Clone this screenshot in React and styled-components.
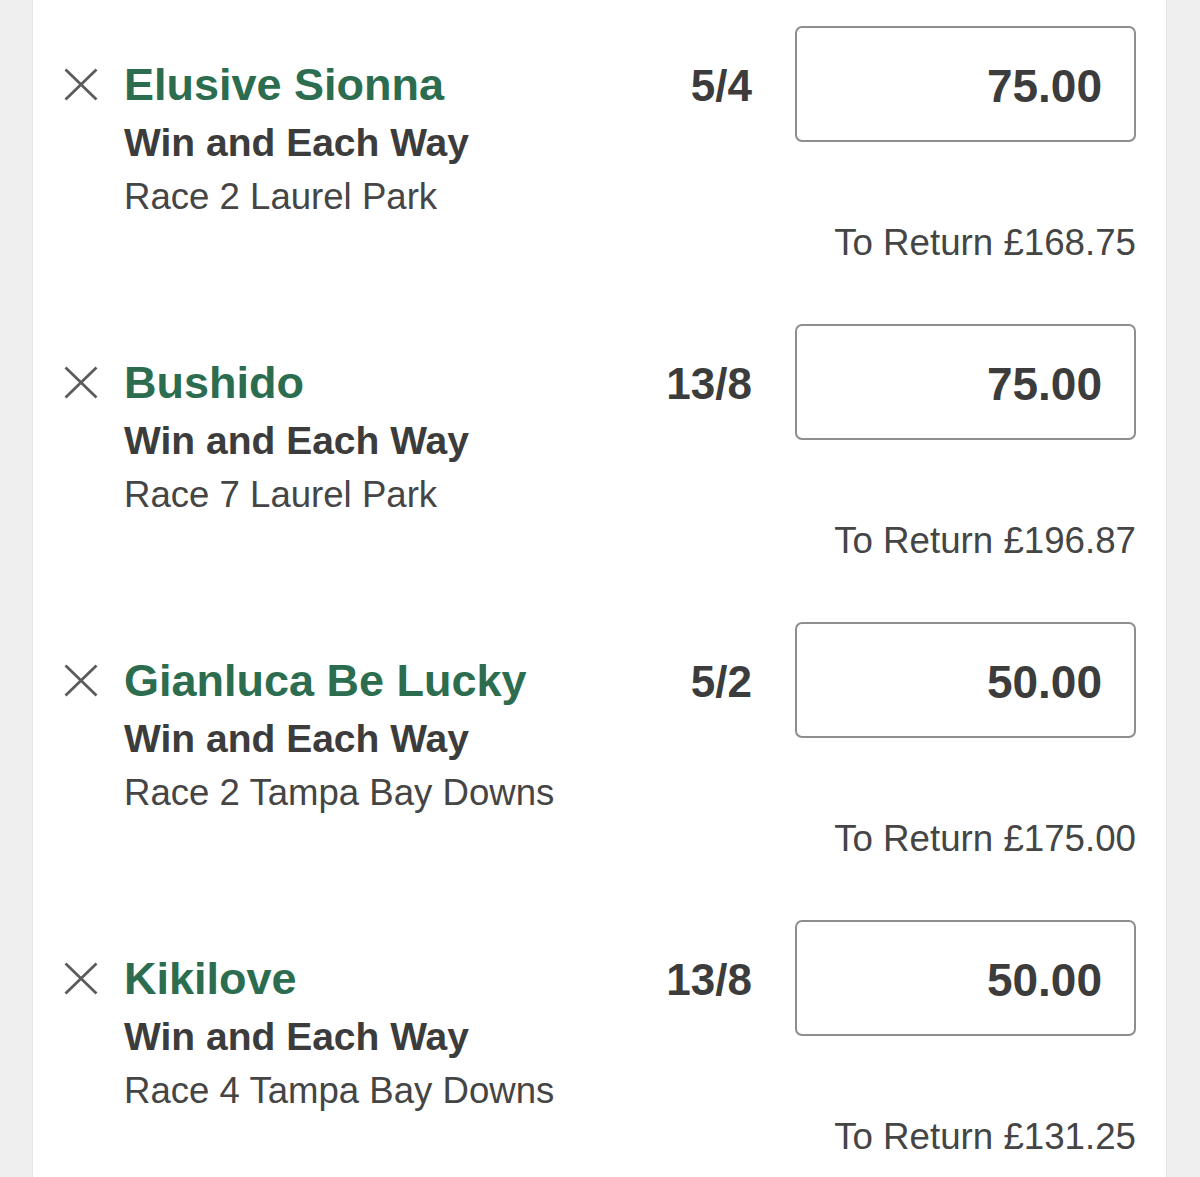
import React from "react";
import styled, { createGlobalStyle } from "styled-components";

const GlobalStyle = createGlobalStyle`
  html, body {
    margin: 0;
    padding: 0;
    overflow: hidden;
    background: #efefef;
    font-family: "Liberation Sans", Arial, sans-serif;
  }
`;

const bets = [
  { name: "Elusive Sionna", race: "Race 2 Laurel Park", odds: "5/4", stake: "75.00", ret: "£168.75" },
  { name: "Bushido", race: "Race 7 Laurel Park", odds: "13/8", stake: "75.00", ret: "£196.87" },
  { name: "Gianluca Be Lucky", race: "Race 2 Tampa Bay Downs", odds: "5/2", stake: "50.00", ret: "£175.00" },
  { name: "Kikilove", race: "Race 4 Tampa Bay Downs", odds: "13/8", stake: "50.00", ret: "£131.25" },
];

const Page = styled.div`
  min-height: 1177px;
  background: #efefef;
`;

const Slip = styled.div`
  margin-left: 32px;
  width: 1135px;
  min-height: 1177px;
  background: #fff;
  border-left: 1px solid #e3e3e3;
  border-right: 1px solid #e3e3e3;
  box-sizing: border-box;
`;

const BetRow = styled.div`
  height: 298px;
  box-sizing: border-box;
  padding: 26px 30px 0 31px;
  display: flex;
  align-items: flex-start;
  justify-content: space-between;
`;

const Left = styled.div`
  display: flex;
  align-items: flex-start;
  gap: 26px;
`;

const RemoveButton = styled.button`
  margin-top: 42px;
  width: 34px;
  height: 33px;
  padding: 0;
  border: 0;
  background: none;
  display: flex;
  cursor: pointer;
`;

const Info = styled.div`
  display: flex;
  flex-direction: column;
  padding-top: 31px;
`;

const Runner = styled.div`
  font-size: 45px;
  line-height: 56px;
  font-weight: 700;
  color: #2c6d4f;
  white-space: nowrap;
`;

const Market = styled.div`
  font-size: 39px;
  line-height: 60px;
  font-weight: 700;
  color: #3c3c3c;
  white-space: nowrap;
`;

const Event = styled.div`
  font-size: 36.6px;
  line-height: 48px;
  color: #454545;
  white-space: nowrap;
`;

const Right = styled.div`
  display: flex;
  flex-direction: column;
  align-items: flex-end;
`;

const PriceLine = styled.div`
  display: flex;
  align-items: center;
  gap: 43px;
`;

const Odds = styled.div`
  font-size: 44px;
  font-weight: 700;
  color: #3c3c3c;
  padding-top: 3px;
`;

const StakeBox = styled.div`
  width: 341px;
  height: 116px;
  box-sizing: border-box;
  border: 2px solid #8e8e8e;
  border-radius: 7px;
  display: flex;
  align-items: center;
  justify-content: flex-end;
  padding: 3px 32px 0 0;
  font-size: 46px;
  font-weight: 700;
  color: #3c3c3c;
`;

const Returns = styled.div`
  margin-top: 79px;
  font-size: 36.7px;
  line-height: 44px;
  color: #454545;
  white-space: nowrap;
`;

const CloseIcon = () => (
  <svg width="34" height="33" viewBox="0 0 34 33">
    <path d="M1.5 1.5 L32.5 31.5 M32.5 1.5 L1.5 31.5" stroke="#5c5c5c" strokeWidth="2.8" fill="none" />
  </svg>
);

export default function App() {
  return (
    <Page>
      <GlobalStyle />
      <Slip>
        {bets.map((b) => (
          <BetRow key={b.name}>
            <Left>
              <RemoveButton aria-label="Remove">
                <CloseIcon />
              </RemoveButton>
              <Info>
                <Runner>{b.name}</Runner>
                <Market>Win and Each Way</Market>
                <Event>{b.race}</Event>
              </Info>
            </Left>
            <Right>
              <PriceLine>
                <Odds>{b.odds}</Odds>
                <StakeBox>{b.stake}</StakeBox>
              </PriceLine>
              <Returns>To Return {b.ret}</Returns>
            </Right>
          </BetRow>
        ))}
      </Slip>
    </Page>
  );
}
